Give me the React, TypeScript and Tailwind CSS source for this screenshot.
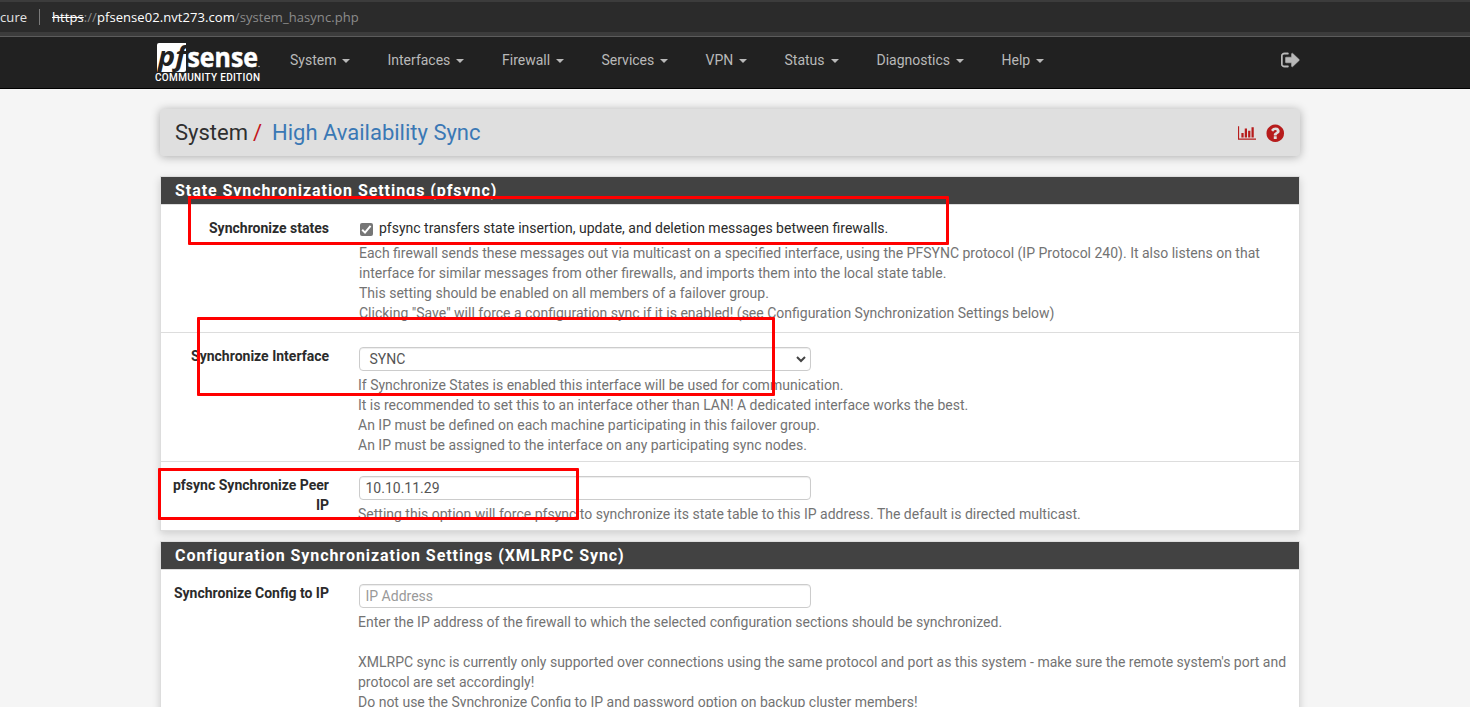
import type { ReactNode } from "react";

const menus = [
  { label: "System", pos: "w-[97.5px]" },
  { label: "Interfaces", pos: "w-[114.5px]" },
  { label: "Firewall", pos: "w-[99.5px]" },
  { label: "Services", pos: "w-[104px]" },
  { label: "VPN", pos: "w-[79px]" },
  { label: "Status", pos: "w-[92px]" },
  { label: "Diagnostics", pos: "w-[125px]" },
  { label: "Help", pos: "w-[60px]" },
];

function AddressBar() {
  return (
    <div className="flex h-[37px] items-center border-t-2 border-b border-t-[#3c3c3c] border-b-[#5c5c5c] bg-[#2b2b2b] font-['Open_Sans',sans-serif] text-[13px] leading-[18px] shadow-[inset_0_-4px_0_#3c3c3c]">
      <div className="flex h-[18px] w-full items-center pb-1">
        <span className="w-[39px] tracking-[0.1px] text-[#e4e4e4]">cure</span>
        <span className="mr-[12px] h-4 w-px bg-[#7a7a7a]" />
        <span className="tracking-[0.07px] whitespace-nowrap text-[#8c8c8c]">
          <span className="text-white line-through">https</span>://
          <span className="text-white">pfsense02.nvt273.com</span>/system_hasync.php
        </span>
      </div>
    </div>
  );
}

function Logo() {
  return (
    <svg className="h-[44px] w-[108px] shrink-0 overflow-visible" viewBox="0 0 108 44" role="img" aria-label="pfSense Community Edition">
      <path d="M5 2h27v27q0 2-2 2H3V4q0-2 2-2z" fill="#fff" />
      <text x="4" y="24.5" fill="#212121" fontFamily="Open Sans, sans-serif" fontWeight="700" fontStyle="italic" fontSize="26" textLength="28" lengthAdjust="spacingAndGlyphs">pf</text>
      <text x="33.5" y="25.5" fill="#fff" fontFamily="Open Sans, sans-serif" fontWeight="700" fontSize="26" textLength="70.5" lengthAdjust="spacingAndGlyphs" stroke="#fff" strokeWidth="0.5">sense</text>
      <circle cx="105" cy="25.5" r="0.8" fill="#aaa" />
      <text x="1" y="40" fill="#fff" fontFamily="Roboto, sans-serif" fontWeight="500" fontSize="10" textLength="105">COMMUNITY EDITION</text>
    </svg>
  );
}

function NavBar() {
  return (
    <nav className="h-[52px] border-b border-black bg-[#212121]">
      <div className="ml-[160px] flex w-[1140px] items-start text-[14px] leading-5 text-[#b9b9b9]">
        <div className="-ml-[6px] flex h-[40px] w-[136px] pt-[4px]">
          <Logo />
        </div>
        {menus.map((m) => (
          <div key={m.label} className={`${m.pos} flex shrink-0 items-center pt-[13px]`}>
            {m.label}
            <span className="mt-px ml-[6px] border-x-4 border-t-4 border-x-transparent border-t-[#b9b9b9]" />
          </div>
        ))}
        <svg className="mt-[13px] ml-auto h-[20px] w-[21px] translate-x-[2px]" viewBox="0 0 1792 1792" preserveAspectRatio="none" fill="currentColor" stroke="currentColor" strokeWidth="40">
          <path d="M640 1440q0 4 1 20t.5 26.5-3 23.5-10 19.5-20.5 6.5h-320q-119 0-203.5-84.5t-84.5-203.5v-704q0-119 84.5-203.5t203.5-84.5h320q13 0 22.5 9.5t9.5 22.5q0 4 1 20t.5 26.5-3 23.5-10 19.5-20.5 6.5h-320q-66 0-113 47t-47 113v704q0 66 47 113t113 47h312l11.5 1 11.5 3 8 5.5 7 9 2 13.5zm928-544q0 26-19 45l-544 544q-19 19-45 19t-45-19-19-45v-288h-448q-26 0-45-19t-19-45v-384q0-26 19-45t45-19h448v-288q0-26 19-45t45-19 45 19l544 544q19 19 19 45z" />
        </svg>
      </div>
    </nav>
  );
}

function Breadcrumb() {
  return (
    <header className="mt-5 flex h-[47px] items-center rounded-[4px] bg-[#dfdfdf] px-[15px] shadow-[0_1px_10px_rgba(0,0,0,0.3)]">
      <h1 className="flex text-[22px] leading-6 whitespace-nowrap text-[#2f2f2f]">
        <span className="w-[78px]">System</span>
        <span className="w-[19px] text-[#c4161c]">/</span>
        <span className="text-[#3a78b5]">High Availability Sync</span>
      </h1>
      <div className="ml-auto flex items-center pt-px text-[#b71c1c]">
        <svg className="h-[15.75px] w-[18px]" viewBox="0 0 2048 1792" fill="currentColor">
          <path d="M640 896v512h-256v-512h256zm384-512v1024h-256v-1024h256zm1024 1152v128h-2048v-1536h128v1408h1920zm-640-896v768h-256v-768h256zm384-384v1152h-256v-1152h256z" />
        </svg>
        <svg className="ml-[9px] h-[20.5px] w-[20.5px]" viewBox="0 0 1792 1792" fill="currentColor">
          <path d="M1024 1376v-192q0-14-9-23t-23-9h-192q-14 0-23 9t-9 23v192q0 14 9 23t23 9h192q14 0 23-9t9-23zm256-672q0-88-55.5-163t-138.5-116-170-41q-243 0-371 213-15 24 8 42l132 100q7 6 19 6 16 0 25-12 53-68 86-92 34-24 86-24 48 0 85.5 26t37.5 59q0 38-20 61t-68 45q-63 28-115.5 86.5t-52.5 125.5v36q0 14 9 23t23 9h192q14 0 23-9t9-23q0-19 21.5-49.5t54.5-49.5q32-18 49-28.5t46-35 44.5-48 28-60.5 12.5-81zm384 192q0 209-103 385.5t-279.5 279.5-385.5 103-385.5-103-279.5-279.5-103-385.5 103-385.5 279.5-279.5 385.5-103 385.5 103 279.5 279.5 103 385.5z" />
        </svg>
      </div>
    </header>
  );
}

function Panel({ title, className, children }: { title: string; className: string; children: ReactNode }) {
  return (
    <section className={`${className} border border-[#dddddd] bg-white shadow-[0_3px_8px_rgba(0,0,0,0.16)]`}>
      <h2 className="h-[28px] border-b border-[#dddddd] bg-[#424242] bg-clip-padding pl-[14px] text-[16px] leading-[27px] font-bold tracking-[0.94px] text-white">
        {title}
      </h2>
      {children}
    </section>
  );
}

function Row({ label, className, children }: { label: ReactNode; className: string; children: ReactNode }) {
  return (
    <div className={`${className} flex pt-[13px]`}>
      <div className="w-[168px] shrink-0 text-right font-bold text-[#2b2b2b]">{label}</div>
      <div className="ml-[30px]">{children}</div>
    </div>
  );
}

function Help({ lines, className }: { lines: string[]; className: string }) {
  return (
    <div className={`${className} whitespace-nowrap text-[#737373]`}>
      {lines.map((line, i) => (
        <p key={i} className="h-5">{line}</p>
      ))}
    </div>
  );
}

const field = "mt-px flex h-6 w-[452px] items-center rounded-[4px] border border-[#cccccc] bg-white shadow-[inset_0_1px_1px_rgba(0,0,0,0.075)]";

export default function App() {
  return (
    <div className="relative h-[707px] w-[1470px] overflow-hidden bg-[#f5f5f5] font-[Roboto,sans-serif] text-[14px] leading-5">
      <AddressBar />
      <NavBar />
      <main className="ml-[160px] w-[1140px]">
        <Breadcrumb />
        <Panel title="State Synchronization Settings (pfsync)" className="mt-[20px] h-[355px]">
          <Row label="Synchronize states" className="h-[128px] border-b border-[#dddddd]">
            <div className="flex items-center whitespace-nowrap text-[#2b2b2b]">
              <span className="mt-[3px] mr-[6px] ml-px flex size-[13px] items-center justify-center rounded-[2px] bg-[#767676]">
                <svg className="size-[11px]" viewBox="0 0 11 11" fill="none" stroke="#fff" strokeWidth="2">
                  <path d="M1.2 5.8l2.8 2.8 5.6-6.8" />
                </svg>
              </span>
              pfsync transfers state insertion, update, and deletion messages between firewalls.
            </div>
            <Help
              className="mt-[5px]"
              lines={[
                "Each firewall sends these messages out via multicast on a specified interface, using the PFSYNC protocol (IP Protocol 240). It also listens on that",
                "interface for similar messages from other firewalls, and imports them into the local state table.",
                "This setting should be enabled on all members of a failover group.",
                "Clicking \"Save\" will force a configuration sync if it is enabled! (see Configuration Synchronization Settings below)",
              ]}
            />
          </Row>
          <Row label="Synchronize Interface" className="h-[129px] border-b border-[#dddddd]">
            <div className={`${field} justify-between pr-[4px] pl-[9.5px] text-[#555555]`}>
              SYNC
              <svg className="h-[10px] w-[10px]" viewBox="0 0 10 10" fill="none" stroke="#444" strokeWidth="2">
                <path d="M1 3l4 4 4-4" />
              </svg>
            </div>
            <Help
              className="mt-[4px] -ml-px"
              lines={[
                "If Synchronize States is enabled this interface will be used for communication.",
                "It is recommended to set this to an interface other than LAN! A dedicated interface works the best.",
                "An IP must be defined on each machine participating in this failover group.",
                "An IP must be assigned to the interface on any participating sync nodes.",
              ]}
            />
          </Row>
          <Row label={<>pfsync Synchronize Peer<br />IP</>} className="h-[68px]">
            <div className={`${field} pl-[5.5px] text-[#555555]`}>10.10.11.29</div>
            <Help
              className="mt-[4px] -ml-px"
              lines={["Setting this option will force pfsync to synchronize its state table to this IP address. The default is directed multicast."]}
            />
          </Row>
        </Panel>
        <Panel title="Configuration Synchronization Settings (XMLRPC Sync)" className="mt-[10px] h-[200px]">
          <Row label="Synchronize Config to IP" className="h-[170px]">
            <div className={`${field} pl-[5.5px] text-[#999999]`}>IP Address</div>
            <Help
              className="mt-[4px] -ml-px"
              lines={[
                "Enter the IP address of the firewall to which the selected configuration sections should be synchronized.",
                "",
                "XMLRPC sync is currently only supported over connections using the same protocol and port as this system - make sure the remote system's port and",
                "protocol are set accordingly!",
                "Do not use the Synchronize Config to IP and password option on backup cluster members!",
              ]}
            />
          </Row>
        </Panel>
      </main>
      <div className="absolute top-[196px] left-[188px] h-[49px] w-[761px] rounded-[1px] border-3 border-[#ff0000]" />
      <div className="absolute top-[317px] left-[197px] h-[79px] w-[578px] rounded-[1px] border-3 border-[#ff0000]" />
      <div className="absolute top-[468px] left-[158px] h-[52px] w-[421px] rounded-[1px] border-3 border-[#ff0000]" />
    </div>
  );
}
